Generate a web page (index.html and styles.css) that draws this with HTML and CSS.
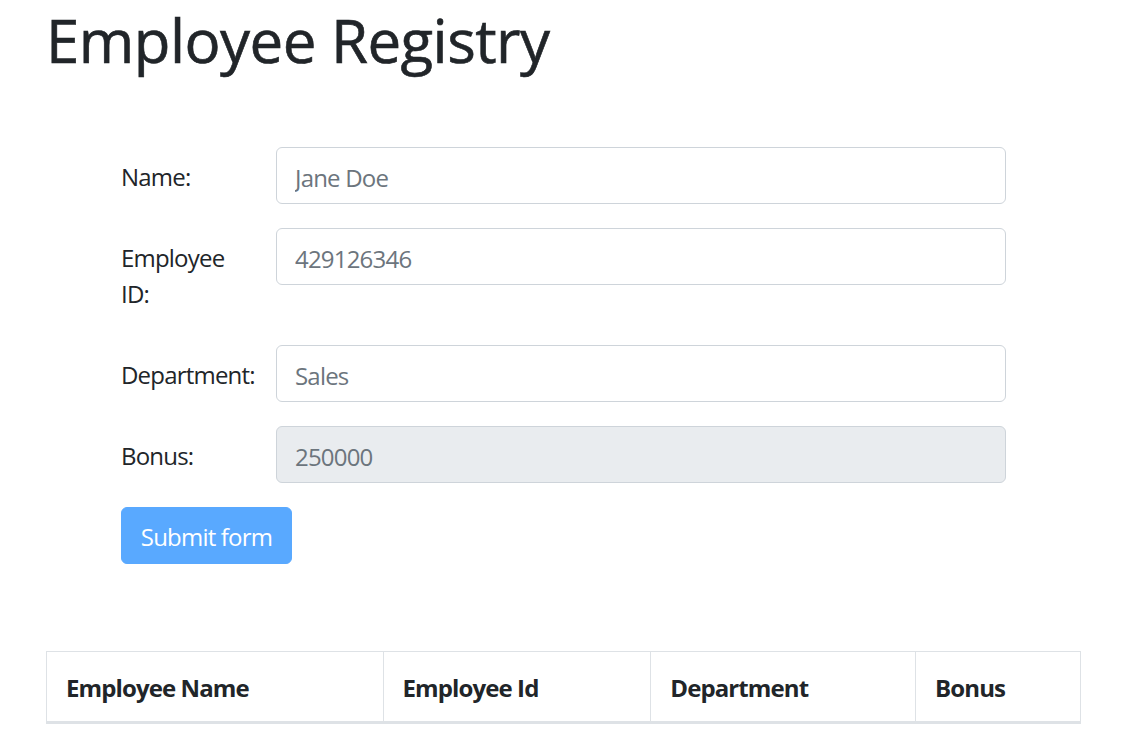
FILE: index.html
```html
<!DOCTYPE html>
<html lang="en">
<head>
<meta charset="utf-8">
<title>Employee Registry</title>
<link rel="stylesheet" href="styles.css">
</head>
<body>
<div class="page">
  <h1 class="title">Employee Registry</h1>
  <form class="form">
    <div class="form-row">
      <label class="label" for="name">Name:</label>
      <input class="input" id="name" type="text" placeholder="Jane Doe">
    </div>
    <div class="form-row">
      <label class="label" for="eid">Employee<br>ID:</label>
      <input class="input" id="eid" type="text" placeholder="429126346">
    </div>
    <div class="form-row">
      <label class="label" for="dept">Department:</label>
      <input class="input" id="dept" type="text" placeholder="Sales">
    </div>
    <div class="form-row">
      <label class="label" for="bonus">Bonus:</label>
      <input class="input input-disabled" id="bonus" type="text" placeholder="250000" disabled>
    </div>
    <button class="btn" type="submit" disabled>Submit form</button>
  </form>
  <table class="table">
    <thead>
      <tr>
        <th class="col-name">Employee Name</th>
        <th class="col-id">Employee Id</th>
        <th class="col-dept">Department</th>
        <th class="col-bonus">Bonus</th>
      </tr>
    </thead>
  </table>
</div>
</body>
</html>
```
FILE: styles.css
```css
* { box-sizing: border-box; }
html, body { margin: 0; padding: 0; background: #fff; }
body {
  font-family: "Open Sans", "Liberation Sans", sans-serif;
  font-size: 24px;
  line-height: 36px;
  letter-spacing: -0.8px;
  color: #212529;
}
.page {
  padding: 4px 47px 0 46px;
}
.title {
  margin: 0;
  font-size: 60px;
  line-height: 72px;
  font-weight: 400;
  letter-spacing: -0.55px;
  -webkit-text-stroke: 0.6px #212529;
  color: #212529;
}
.form {
  margin: 71px 0 0 75px;
}
.form-row {
  display: grid;
  grid-template-columns: 155px 730px;
  align-items: start;
  margin-bottom: 24px;
}
.label {
  padding: 12px 18px 9px 0;
  font-size: 24px;
  line-height: 36px;
}
.input {
  display: block;
  width: 730px;
  height: 57px;
  padding: 11px 18px 7px;
  font-family: inherit;
  font-size: 24px;
  line-height: 36px;
  letter-spacing: -0.8px;
  color: #495057;
  background: #fff;
  border: 1.5px solid #ced4da;
  border-radius: 6px;
  outline: none;
}
.input::placeholder { color: #6c757d; opacity: 1; }
.input-disabled { background: #e9ecef; }
.btn {
  display: block;
  height: 57px;
  width: 171px;
  padding: 10px 0 8px;
  font-family: inherit;
  font-size: 24px;
  line-height: 36px;
  letter-spacing: -0.8px;
  white-space: nowrap;
  text-align: center;
  color: #fff;
  background: #59a9ff;
  border: 1.5px solid #59a9ff;
  border-radius: 6px;
}
.table {
  margin-top: 87px;
  width: 1035px;
  border-collapse: collapse;
}
.table th {
  text-align: left;
  font-weight: 700;
  letter-spacing: -0.9px;
  padding: 18px 18px 15px 19px;
  line-height: 36px;
  border: 1px solid #dee2e6;
  border-bottom: 3px solid #dee2e6;
}
.col-name { width: 337px; }
.col-id { width: 268px; }
.col-dept { width: 265px; }
.col-bonus { width: 165px; }
```
